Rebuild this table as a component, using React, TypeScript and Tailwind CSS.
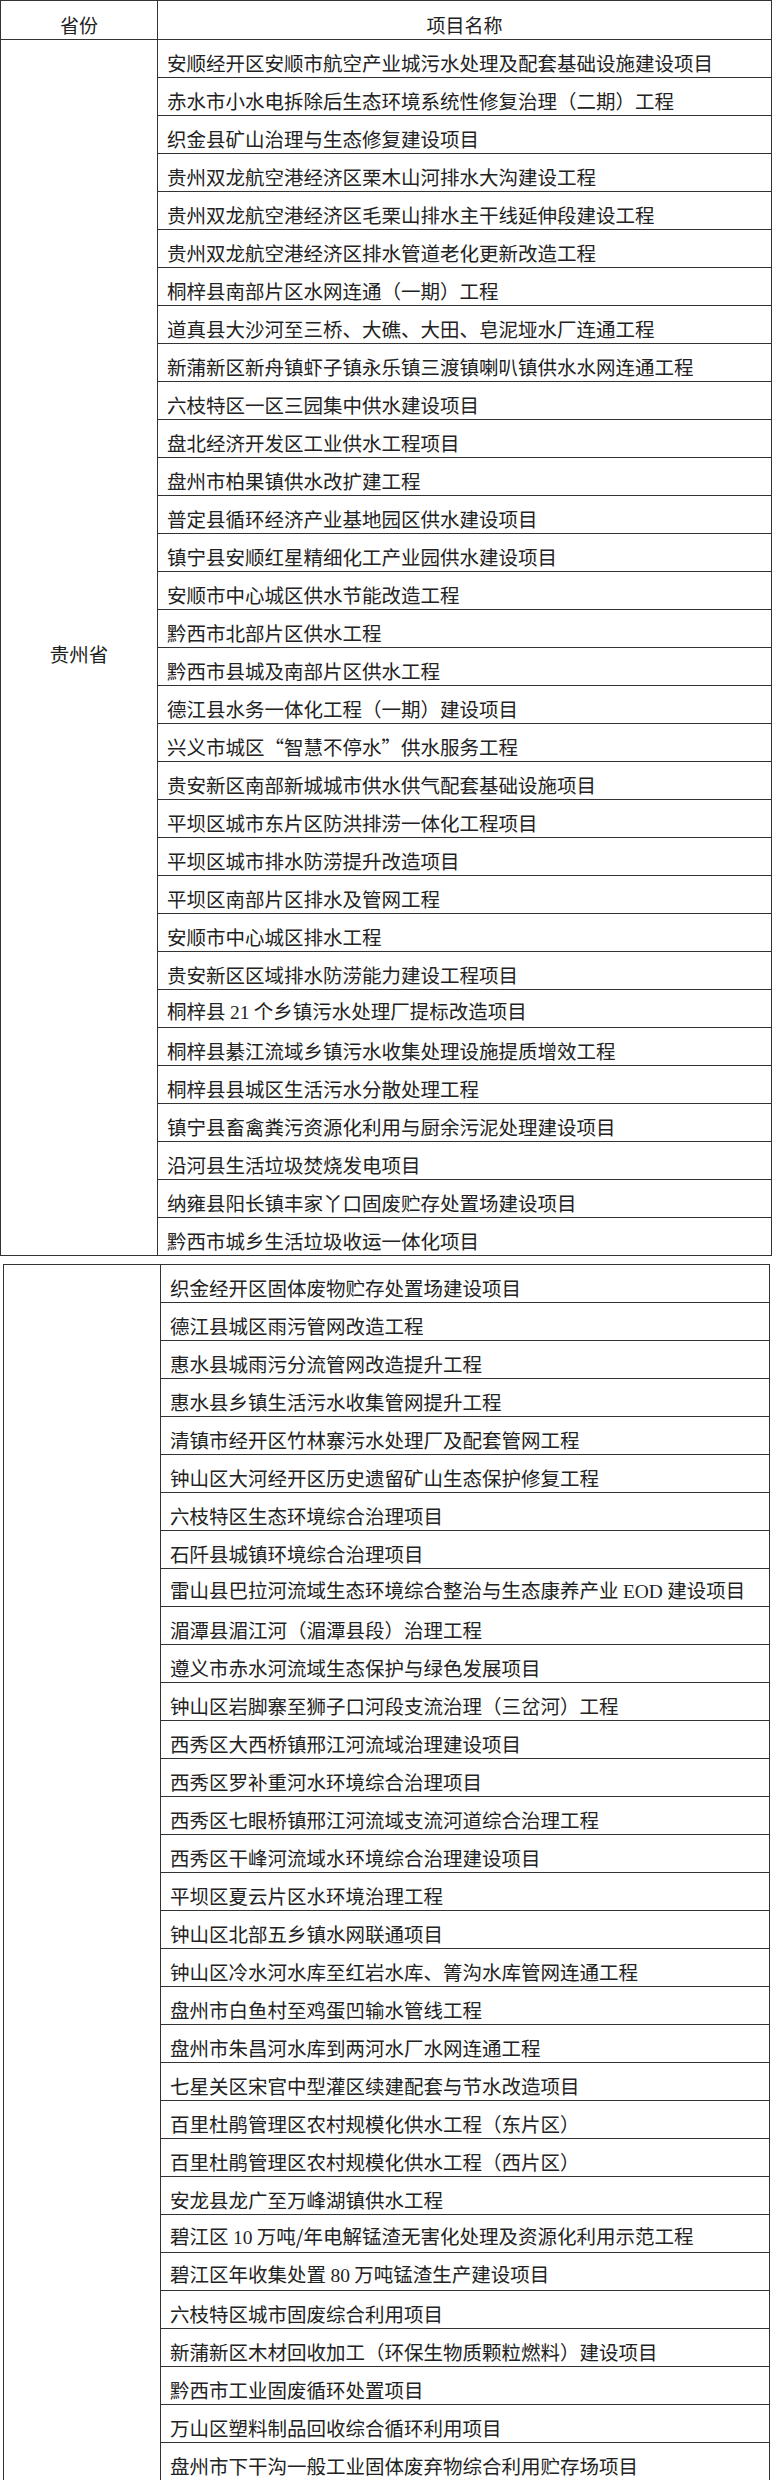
import React from "react";

const cjk = { fontFamily: '"Noto Sans CJK SC", "Noto Sans", sans-serif' };

type Item = React.ReactNode;

const S = ({ children }: { children: React.ReactNode }) => (
  <span className="font-['Liberation_Serif',serif]">{children}</span>
);

const table1: Item[] = [
  "安顺经开区安顺市航空产业城污水处理及配套基础设施建设项目",
  "赤水市小水电拆除后生态环境系统性修复治理（二期）工程",
  "织金县矿山治理与生态修复建设项目",
  "贵州双龙航空港经济区栗木山河排水大沟建设工程",
  "贵州双龙航空港经济区毛栗山排水主干线延伸段建设工程",
  "贵州双龙航空港经济区排水管道老化更新改造工程",
  "桐梓县南部片区水网连通（一期）工程",
  "道真县大沙河至三桥、大礁、大田、皂泥垭水厂连通工程",
  "新蒲新区新舟镇虾子镇永乐镇三渡镇喇叭镇供水水网连通工程",
  "六枝特区一区三园集中供水建设项目",
  "盘北经济开发区工业供水工程项目",
  "盘州市柏果镇供水改扩建工程",
  "普定县循环经济产业基地园区供水建设项目",
  "镇宁县安顺红星精细化工产业园供水建设项目",
  "安顺市中心城区供水节能改造工程",
  "黔西市北部片区供水工程",
  "黔西市县城及南部片区供水工程",
  "德江县水务一体化工程（一期）建设项目",
  "兴义市城区“智慧不停水”供水服务工程",
  "贵安新区南部新城城市供水供气配套基础设施项目",
  "平坝区城市东片区防洪排涝一体化工程项目",
  "平坝区城市排水防涝提升改造项目",
  "平坝区南部片区排水及管网工程",
  "安顺市中心城区排水工程",
  "贵安新区区域排水防涝能力建设工程项目",
  <>桐梓县 <S>21</S> 个乡镇污水处理厂提标改造项目</>,
  "桐梓县綦江流域乡镇污水收集处理设施提质增效工程",
  "桐梓县县城区生活污水分散处理工程",
  "镇宁县畜禽粪污资源化利用与厨余污泥处理建设项目",
  "沿河县生活垃圾焚烧发电项目",
  "纳雍县阳长镇丰家丫口固废贮存处置场建设项目",
  "黔西市城乡生活垃圾收运一体化项目",
];

const table2: Item[] = [
  "织金经开区固体废物贮存处置场建设项目",
  "德江县城区雨污管网改造工程",
  "惠水县城雨污分流管网改造提升工程",
  "惠水县乡镇生活污水收集管网提升工程",
  "清镇市经开区竹林寨污水处理厂及配套管网工程",
  "钟山区大河经开区历史遗留矿山生态保护修复工程",
  "六枝特区生态环境综合治理项目",
  "石阡县城镇环境综合治理项目",
  <>雷山县巴拉河流域生态环境综合整治与生态康养产业 <S>EOD</S> 建设项目</>,
  "湄潭县湄江河（湄潭县段）治理工程",
  "遵义市赤水河流域生态保护与绿色发展项目",
  "钟山区岩脚寨至狮子口河段支流治理（三岔河）工程",
  "西秀区大西桥镇邢江河流域治理建设项目",
  "西秀区罗补重河水环境综合治理项目",
  "西秀区七眼桥镇邢江河流域支流河道综合治理工程",
  "西秀区干峰河流域水环境综合治理建设项目",
  "平坝区夏云片区水环境治理工程",
  "钟山区北部五乡镇水网联通项目",
  "钟山区冷水河水库至红岩水库、箐沟水库管网连通工程",
  "盘州市白鱼村至鸡蛋凹输水管线工程",
  "盘州市朱昌河水库到两河水厂水网连通工程",
  "七星关区宋官中型灌区续建配套与节水改造项目",
  "百里杜鹃管理区农村规模化供水工程（东片区）",
  "百里杜鹃管理区农村规模化供水工程（西片区）",
  "安龙县龙广至万峰湖镇供水工程",
  <>碧江区 <S>10</S> 万吨/年电解锰渣无害化处理及资源化利用示范工程</>,
  <>碧江区年收集处置 <S>80</S> 万吨锰渣生产建设项目</>,
  "六枝特区城市固废综合利用项目",
  "新蒲新区木材回收加工（环保生物质颗粒燃料）建设项目",
  "黔西市工业固废循环处置项目",
  "万山区塑料制品回收综合循环利用项目",
  "盘州市下干沟一般工业固体废弃物综合利用贮存场项目",
];

function Rows({ items }: { items: Item[] }) {
  return (
    <div className="flex flex-1 flex-col">
      {items.map((t, i) => (
        <div
          key={i}
          className="flex h-[38px] items-end border-b border-[#333] pb-[3px] pl-[9px] last:h-[37px] last:border-b-0"
        >
          <span className="whitespace-nowrap text-[19.5px] leading-[22px] text-[#222]">{t}</span>
        </div>
      ))}
    </div>
  );
}

export default function App() {
  return (
    <div className="w-[772px] bg-white" style={cjk}>
      <div className="w-[772px] border border-[#333]">
        <div className="flex h-[39px] border-b border-[#333]">
          <div className="flex w-[157px] items-end justify-center border-r border-[#333] pb-[3px]">
            <span className="text-[19px] leading-[22px] text-[#222]">省份</span>
          </div>
          <div className="flex flex-1 items-end justify-center pb-[3px]">
            <span className="text-[19px] leading-[22px] text-[#222]">项目名称</span>
          </div>
        </div>
        <div className="flex">
          <div className="flex w-[157px] items-center justify-center border-r border-[#333] pt-[12px]">
            <span className="text-[19.5px] leading-[22px] text-[#222]">贵州省</span>
          </div>
          <Rows items={table1} />
        </div>
      </div>
      <div className="ml-[3px] mt-[8px] w-[767px] border border-[#333]">
        <div className="flex">
          <div className="w-[157px] border-r border-[#333]" />
          <Rows items={table2} />
        </div>
      </div>
    </div>
  );
}
